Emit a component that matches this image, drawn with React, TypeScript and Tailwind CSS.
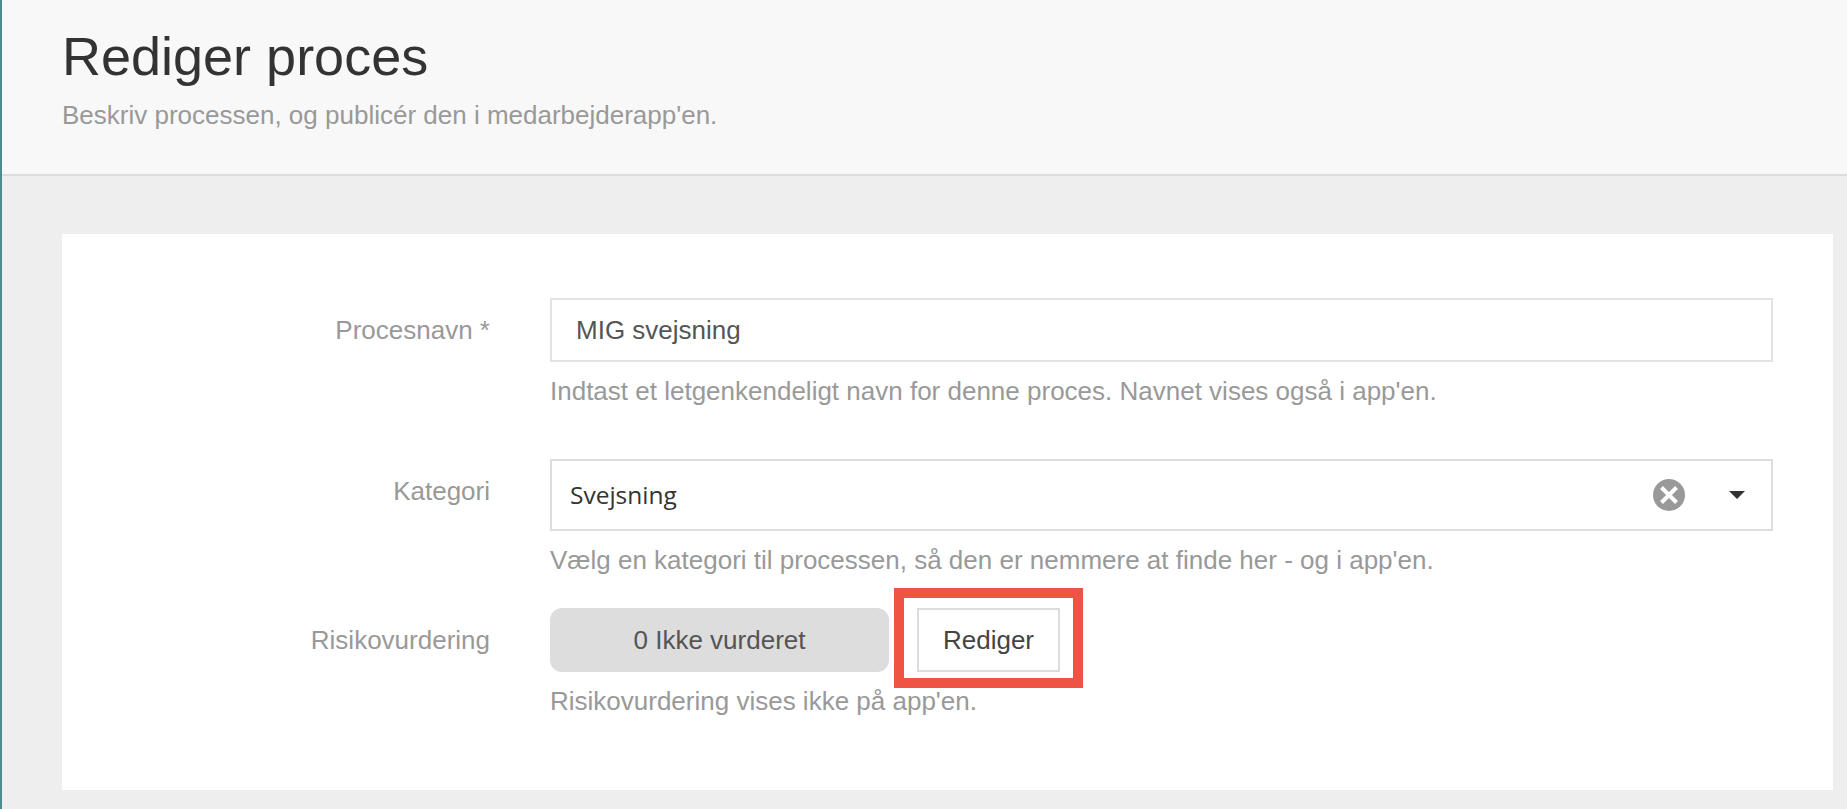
function FormRow({
  label,
  help,
  children,
  rowClass,
}: {
  label: string;
  help: string;
  children: React.ReactNode;
  rowClass: string;
}) {
  return (
    <div className={`flex ${rowClass}`}>
      <div className="w-[428px] shrink-0 pt-[14px] text-right text-[26px] leading-[36px] text-[#999]">
        {label}
      </div>
      <div className="ml-[60px] w-[1223px]">
        {children}
        <p className="mt-[11px] text-[26px] leading-[36px] text-[#999]">{help}</p>
      </div>
    </div>
  );
}

export default function App() {
  return (
    <div className="h-[809px] overflow-hidden border-l-2 border-[#4d8b8f] bg-[#eee] font-['Liberation_Sans',Arial,sans-serif]">
      {/* Page header */}
      <header className="h-[176px] border-b-2 border-[#ddd] bg-[#f8f8f8] pl-[60px] pt-[21px]">
        <h1 className="text-[54px] leading-[70px] font-normal text-[#333]">Rediger proces</h1>
        <p className="mt-[6px] text-[26px] leading-[36px] text-[#999]">
          Beskriv processen, og publicér den i medarbejderapp'en.
        </p>
      </header>

      <div className="pl-[60px] pr-[14px] pt-[58px]">
        <div className="h-[556px] bg-white pt-[64px]">
          <FormRow
            label="Procesnavn *"
            help="Indtast et letgenkendeligt navn for denne proces. Navnet vises også i app'en."
            rowClass="h-[161px]"
          >
            <input
              defaultValue="MIG svejsning"
              className="h-[64px] w-full border-2 border-[#e3e3e3] bg-white px-[24px] text-[26px] text-[#555] outline-none"
            />
          </FormRow>

          <FormRow
            label="Kategori"
            help="Vælg en kategori til processen, så den er nemmere at finde her - og i app'en."
            rowClass="h-[149px]"
          >
            <div className="flex h-[72px] w-full items-center border-2 border-[#ddd] pl-[18px] pr-[26px] font-['Open_Sans',sans-serif] text-[24.5px] text-[#333]">
              <span className="flex-1">Svejsning</span>
              <svg width="32" height="32" viewBox="0 0 32 32" className="mr-[44px]">
                <circle cx="16" cy="16" r="16" fill="#999" />
                <path d="M8.5 8.5 L23.5 23.5 M23.5 8.5 L8.5 23.5" stroke="#fff" strokeWidth="4" />
              </svg>
              <svg width="16" height="8" viewBox="0 0 16 8">
                <path d="M0 0 H16 L8 8 Z" fill="#333" />
              </svg>
            </div>
          </FormRow>

          <FormRow label="Risikovurdering" help="Risikovurdering vises ikke på app'en." rowClass="">
            <div className="flex gap-[28px]">
              <div className="flex h-[64px] w-[339px] items-center justify-center rounded-[12px] bg-[#ddd] text-[26px] text-[#555]">
                0 Ikke vurderet
              </div>
              <div className="relative">
                <button className="h-[64px] w-[143px] border-2 border-[#ddd] bg-white text-[26px] text-[#444]">
                  Rediger
                </button>
                {/* Red annotation frame */}
                <div className="absolute -top-[20px] -bottom-[16px] -left-[23px] -right-[23px] border-[10px] border-[#ee5344]" />
              </div>
            </div>
          </FormRow>
        </div>
      </div>
    </div>
  );
}
